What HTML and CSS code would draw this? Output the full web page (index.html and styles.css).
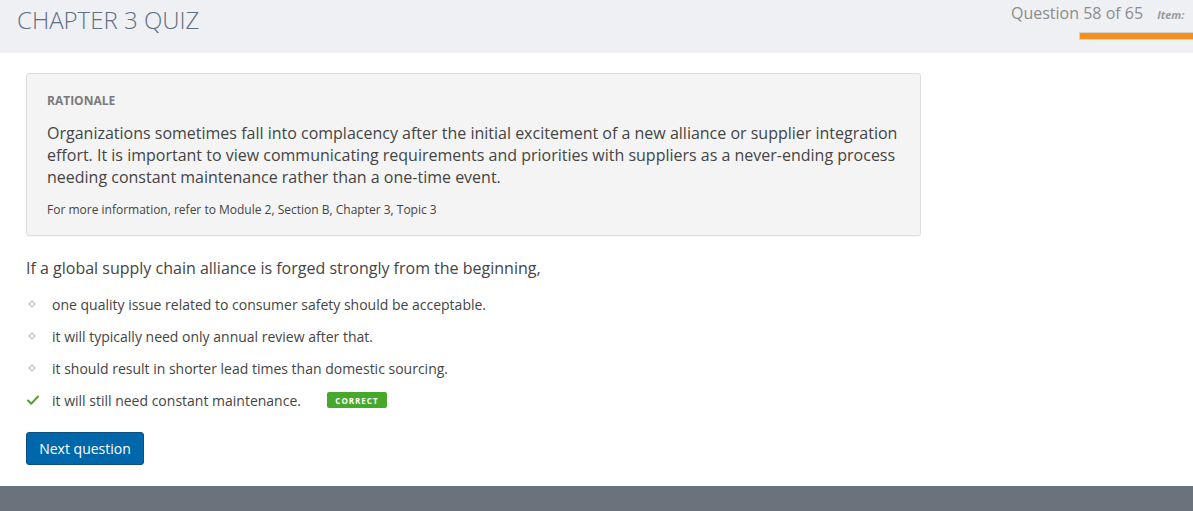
FILE: index.html
```html
<!DOCTYPE html>
<html>
<head>
<meta charset="utf-8">
<link rel="stylesheet" href="styles.css">
</head>
<body>
<header class="topbar">
  <h1 class="title">CHAPTER 3 QUIZ</h1>
  <div class="status">
    <div class="status-row">
      <span class="count">Question 58 of 65</span>
      <span class="item">Item:</span>
    </div>
    <div class="progress"></div>
  </div>
</header>
<main class="content">
  <section class="rationale">
    <h2 class="rationale-head">RATIONALE</h2>
    <p class="rationale-body">Organizations sometimes fall into complacency after the initial excitement of a new alliance or supplier integration effort. It is important to view communicating requirements and priorities with suppliers as a never-ending process needing constant maintenance rather than a one-time event.</p>
    <p class="rationale-ref">For more information, refer to Module 2, Section B, Chapter 3, Topic 3</p>
  </section>
  <p class="question">If a global supply chain alliance is forged strongly from the beginning,</p>
  <ul class="options">
    <li class="option"><span class="mark"><svg width="8" height="8" viewBox="0 0 8 8"><path d="M4 1 L7 4 L4 7 L1 4 Z" fill="none" stroke="#c4c4c4" stroke-width="1.2"/></svg></span><span>one quality issue related to consumer safety should be acceptable.</span></li>
    <li class="option"><span class="mark"><svg width="8" height="8" viewBox="0 0 8 8"><path d="M4 1 L7 4 L4 7 L1 4 Z" fill="none" stroke="#c4c4c4" stroke-width="1.2"/></svg></span><span>it will typically need only annual review after that.</span></li>
    <li class="option"><span class="mark"><svg width="8" height="8" viewBox="0 0 8 8"><path d="M4 1 L7 4 L4 7 L1 4 Z" fill="none" stroke="#c4c4c4" stroke-width="1.2"/></svg></span><span>it should result in shorter lead times than domestic sourcing.</span></li>
    <li class="option"><span class="mark"><svg width="12" height="10" viewBox="0 0 12 10"><path d="M1 5.5 L4.2 8.7 L11 1.5" fill="none" stroke="#5c9e2c" stroke-width="2" stroke-linecap="round" stroke-linejoin="round"/></svg></span><span>it will still need constant maintenance.</span><span class="badge">CORRECT</span></li>
  </ul>
  <button class="next">Next question</button>
</main>
<footer class="footer"></footer>
</body>
</html>
```

FILE: styles.css
```css
* { box-sizing: border-box; }
html, body { margin: 0; padding: 0; }
body {
  font-family: "Open Sans", "Liberation Sans", sans-serif;
  background: #ffffff;
  color: #444;
  width: 1193px;
  height: 511px;
  overflow: hidden;
  display: flex;
  flex-direction: column;
}
.topbar {
  height: 53px;
  background: #eff0f4;
  display: flex;
  justify-content: space-between;
  overflow: hidden;
  flex-shrink: 0;
}
.title {
  margin: 4px 0 0 17px;
  font-size: 24px;
  font-weight: 300;
  color: #5d6f81;
  line-height: 32px;
}
.status {
  width: 182px;
  display: flex;
  flex-direction: column;
  padding-top: 2px;
  flex-shrink: 0;
}
.status-row {
  display: flex;
  align-items: baseline;
  white-space: nowrap;
}
.count {
  font-size: 16px;
  color: #8c8c8c;
  line-height: 22px;
}
.item {
  margin-left: 14px;
  font-size: 11px;
  font-weight: 700;
  font-style: italic;
  color: #9a9a9a;
}
.progress {
  margin: 8px 0 0 68px;
  width: 140px;
  height: 8px;
  background: #f39020;
  border: 1px solid #d7d2cc;
  border-right: none;
  border-radius: 1px 0 0 1px;
}
.content {
  flex: 1;
  padding: 20px 0 0 26px;
}
.rationale {
  width: 895px;
  height: 163px;
  background: #f4f4f4;
  border: 1px solid #dedede;
  border-radius: 3px;
  box-shadow: 0 1px 1px rgba(0,0,0,0.04);
  padding: 18px 20px 0 20px;
}
.rationale-head {
  margin: 0;
  font-size: 12px;
  font-weight: 700;
  color: #7b7b7b;
  line-height: 17px;
}
.rationale-body {
  margin: 13px 0 0 0;
  font-size: 16px;
  line-height: 22px;
  color: #444;
}
.rationale-ref {
  margin: 13px 0 0 0;
  font-size: 12px;
  line-height: 17px;
  color: #444;
}
.question {
  margin: 21px 0 0 0;
  font-size: 16px;
  line-height: 22px;
  color: #444;
}
.options {
  list-style: none;
  margin: 15px 0 0 0;
  padding: 0;
  display: flex;
  flex-direction: column;
  gap: 12px;
}
.option {
  display: flex;
  align-items: center;
  height: 20px;
  font-size: 14px;
  color: #444;
}
.mark {
  width: 26px;
  display: flex;
  align-items: center;
  padding-left: 1px;
}
.option:not(:last-child) .mark { padding-left: 2px; }
.badge {
  margin-left: 26px;
  width: 60px;
  height: 16px;
  background: #48a82c;
  color: #fff;
  font-size: 8px;
  font-weight: 700;
  letter-spacing: 1px;
  border-radius: 2px;
  display: flex;
  align-items: center;
  justify-content: center;
}
.next {
  margin-top: 22px;
  width: 118px;
  height: 33px;
  background: #0067ab;
  border: 1px solid #0b4f7e;
  border-radius: 3px;
  color: #fff;
  font-family: "Open Sans", "Liberation Sans", sans-serif;
  font-size: 14px;
  padding: 0;
}
.footer {
  height: 25px;
  background: #6a737b;
  flex-shrink: 0;
}
```
